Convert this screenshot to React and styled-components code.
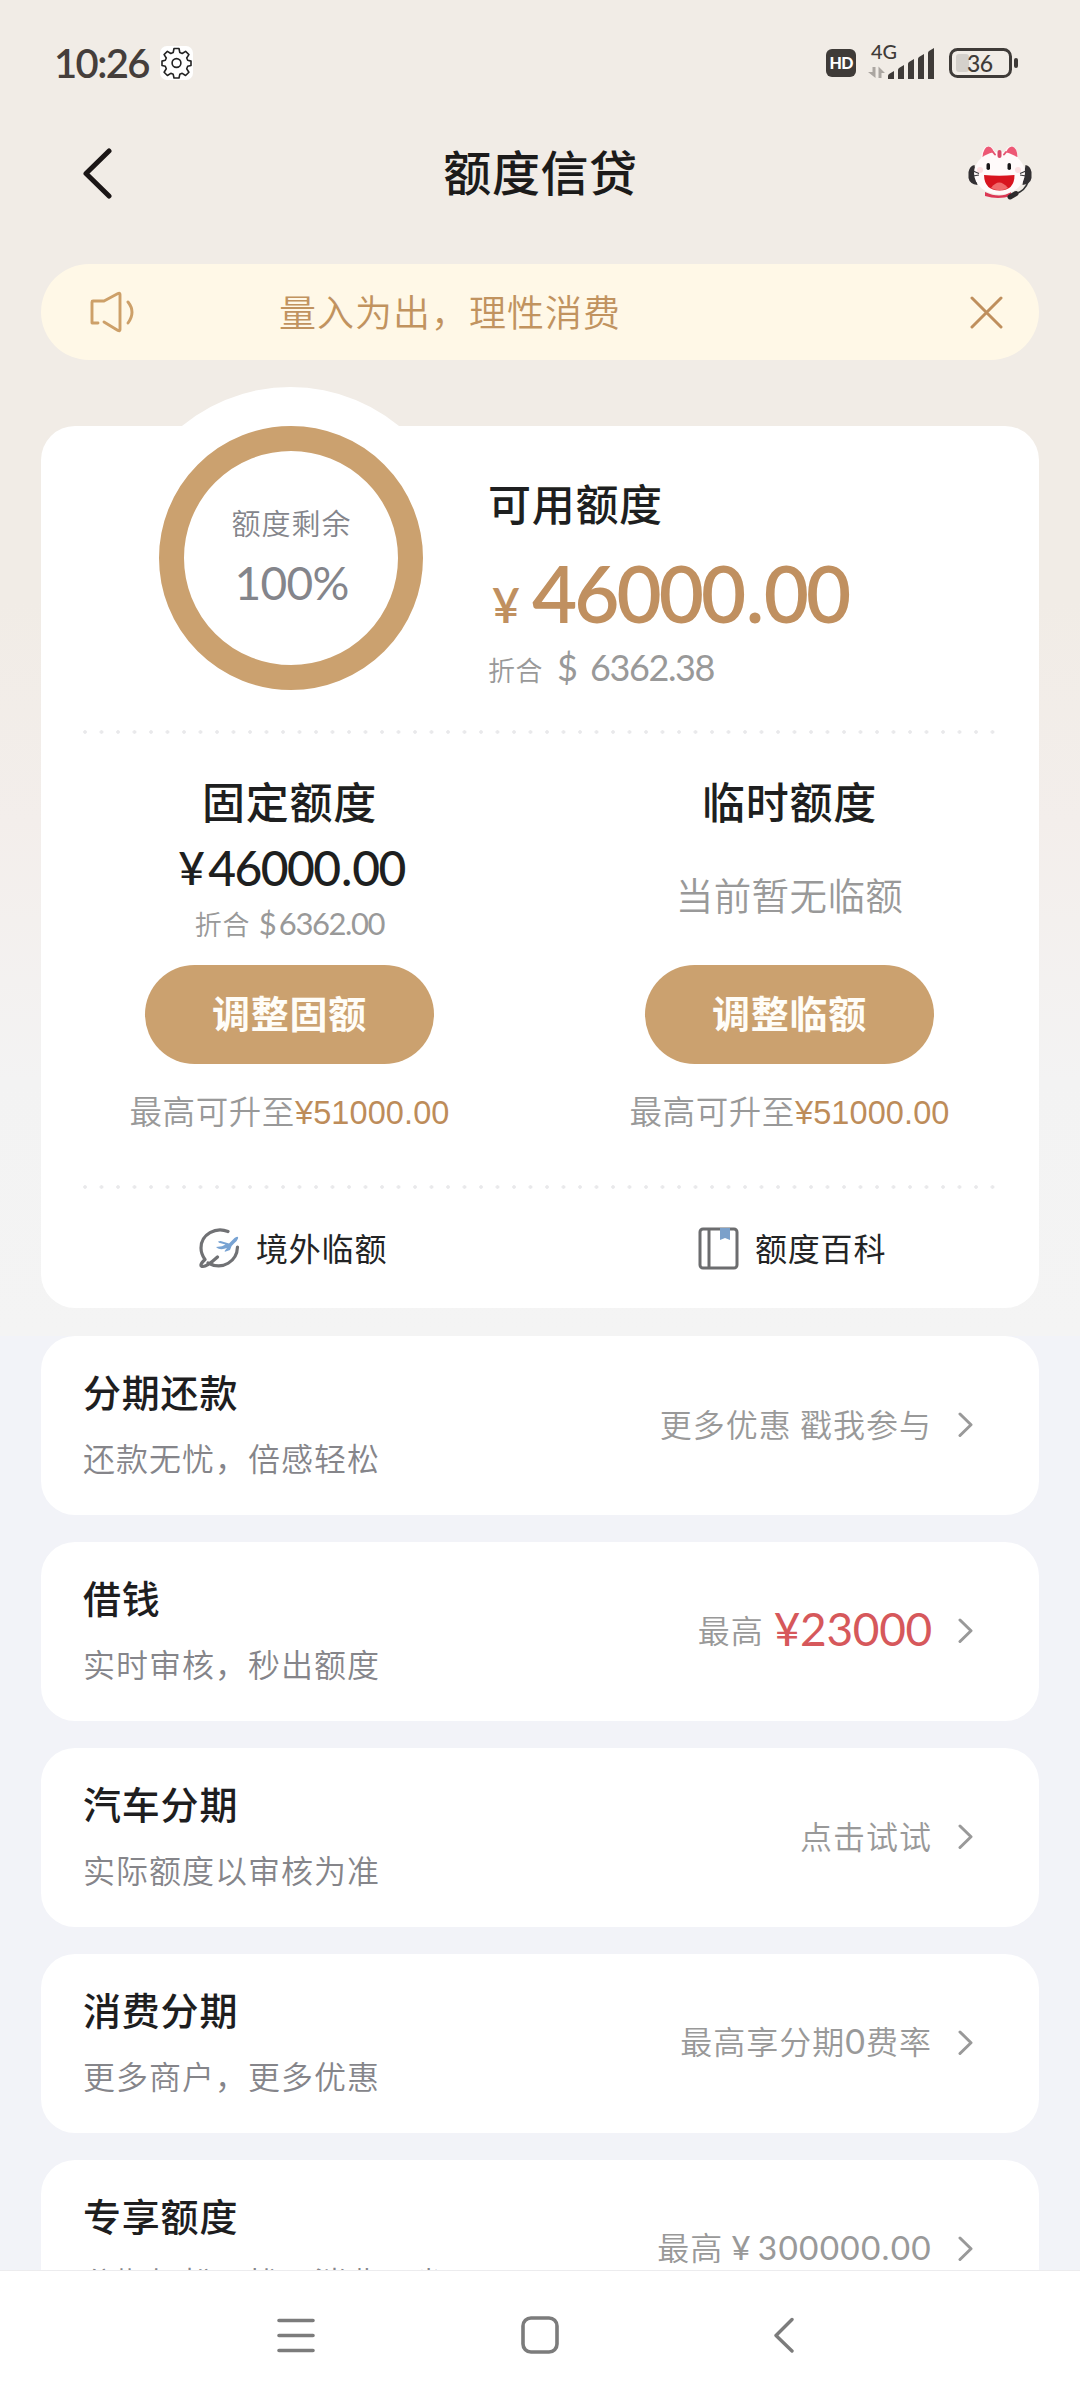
import React from "react";
import styled, { createGlobalStyle } from "styled-components";

const Global = createGlobalStyle`
  *{box-sizing:border-box}
  body{margin:0;font-family:"Noto Sans CJK SC",sans-serif}
`;
const num = `font-family:Lato,"Noto Sans CJK SC",sans-serif;`;

const Screen = styled.div`
  width:1080px;height:2400px;overflow:hidden;display:flex;flex-direction:column;
  background:linear-gradient(#f1ece6 0,#f1ece6 600px,#f3eeeb 820px,#f3f3f3 1080px,#f4f4f4 1336px,#f2f3f8 1336px);
`;
const StatusBar = styled.div`
  height:126px;flex:none;padding:0 55px 0 54px;display:flex;justify-content:space-between;align-items:center;
`;
const StatusGroup = styled.div`display:flex;align-items:center;`;
const Clock = styled.span`${num}font-size:40px;line-height:48px;color:#453e3b;font-weight:600;width:106px;letter-spacing:-1.6px;white-space:nowrap;`;
const Header = styled.header`
  height:138px;flex:none;padding:0 47px 43px 82px;display:grid;grid-template-columns:70px 1fr 70px;align-items:center;
  svg:last-child{margin:-3px 0 0 3px;}
`;
const Title = styled.h1`margin:-8px 0 0 -34px;text-align:center;font-size:48px;line-height:64px;letter-spacing:.6px;font-weight:500;color:#1c1b1a;`;
const Notice = styled.div`
  flex:none;margin:0 41px;height:96px;border-radius:48px;background:#fff8e7;display:flex;align-items:center;padding:0 36px 0 47px;color:#c1935f;
`;
const NoticeText = styled.span`flex:1;padding:0 0 3px 143px;font-size:37px;letter-spacing:1px;font-weight:350;`;
const Panel = styled.section`
  flex:none;margin:66px 41px 0;height:882px;border-radius:34px;background:#fff;display:flex;flex-direction:column;
`;
const Summary = styled.div`height:304px;display:flex;`;
const Gauge = styled.div`
  width:341px;height:341px;flex:none;margin:-39px 0 0 79px;border-radius:50%;background:#fff;display:grid;place-items:center;
`;
const Ring = styled.div`
  width:264px;height:264px;border-radius:50%;border:25px solid #cba16f;display:flex;flex-direction:column;align-items:center;padding:51px 0 0 2px;color:#84858b;
`;
const RingLabel = styled.span`font-size:29px;line-height:40px;letter-spacing:1px;font-weight:350;`;
const RingValue = styled.span`${num}font-size:46px;line-height:56px;margin-top:13px;letter-spacing:-.7px;`;
const Available = styled.div`padding:48px 0 0 27px;display:flex;flex-direction:column;white-space:nowrap;`;
const PanelHeading = styled.h2`margin:0;font-size:43px;line-height:56px;letter-spacing:.7px;font-weight:500;color:#1e1f20;`;
const Amount = styled.div`
  ${num}font-size:78px;line-height:84px;margin-top:21px;letter-spacing:-3px;font-weight:600;color:#c09060;display:flex;align-items:baseline;
`;
const Point = styled.span`margin:0 ${p => p.$gap}px;`;
const Yen = styled.span`font-size:${p => p.$size}px;width:${p => p.$w}px;padding-left:${p => p.$pad || 0}px;letter-spacing:0;`;
const Converted = styled.div`
  ${num}display:flex;align-items:baseline;color:#999;line-height:40px;font-size:${p => p.$size}px;letter-spacing:-1.4px;
`;
const ConvLabel = styled.span`font-family:"Noto Sans CJK SC",sans-serif;font-size:27px;letter-spacing:.6px;font-weight:350;width:${p => p.$w}px;`;
const Dollar = styled.span`width:${p => p.$w}px;`;
const Dots = styled.div`
  height:4px;margin:0 41px;flex:none;background:radial-gradient(circle at 3px 2px,#e9e9eb 1.5px,transparent 2.1px) 0 0/16.5px 4px repeat-x;
`;
const Columns = styled.div`height:451px;display:grid;grid-template-columns:500px 500px;margin-right:-2px;`;
const Column = styled.div`display:flex;flex-direction:column;align-items:center;padding:38px 3px 0 0;white-space:nowrap;`;
const FixedAmount = styled.div`${num}height:56px;line-height:56px;font-size:48px;letter-spacing:-1.6px;font-weight:500;color:#1e1f20;display:flex;margin:12px 0 7px 4px;`;
const Empty = styled.div`height:115px;line-height:91px;padding-top:20px;font-size:37.500px;letter-spacing:.4px;font-weight:350;color:#999;`;
const PillButton = styled.button`
  width:289px;height:99px;border:0;border-radius:50px;background:#cba16f;color:#fffdf8;font:700 38px/94px "Noto Sans CJK SC",sans-serif;letter-spacing:.8px;padding:0 0 5px;margin-top:22px;
`;
const ConvBox = styled.div`height:40px;`;
const UpTo = styled.div`margin-top:21px;font-size:32.500px;line-height:50px;letter-spacing:.6px;font-weight:350;color:#999;`;
const UpToAmount = styled.span`font-family:"Liberation Sans",sans-serif;color:#bd8c5a;letter-spacing:.1px;font-size:32.500px;`;
const Links = styled.div`flex:1;display:grid;grid-template-columns:500px 1fr;`;
const LinkItem = styled.div`
  display:flex;align-items:center;padding:0 0 1px ${p => p.$left}px;gap:16px;font-size:32px;letter-spacing:.8px;color:#232425;
`;
const LinkText = styled.span`margin-top:-3px;`;
const List = styled.div`flex:1;min-height:0;overflow:hidden;padding:28px 41px 0;display:flex;flex-direction:column;gap:27px;`;
const Card = styled.section`
  flex:none;height:179px;border-radius:34px;background:#fff;padding:0 66px 0 42px;display:flex;align-items:center;justify-content:space-between;
`;
const CardTitle = styled.h3`margin:0;font-size:38px;line-height:50px;letter-spacing:.8px;font-weight:500;color:#1e1e1f;`;
const CardSub = styled.p`margin:16px 0 0;font-size:32px;line-height:50px;letter-spacing:1px;font-weight:350;color:#85858a;white-space:nowrap;`;
const CardCopy = styled.div`padding-bottom:3px;`;
const CardAction = styled.div`
  display:flex;align-items:center;gap:25px;color:#999;white-space:nowrap;margin-top:-2px;
`;
const ActionText = styled.span`display:flex;align-items:${p => (p.$centered ? "center" : "baseline")};font-size:32px;line-height:44px;letter-spacing:1px;font-weight:350;margin-top:-4px;`;
const RedAmount = styled.span`${num}font-size:46px;font-weight:400;color:#d6585b;letter-spacing:-.3px;margin-left:10px;`;
const Digits = styled.span`${num}font-size:${p => p.$size}px;letter-spacing:${p => p.$ls}px;margin-left:${p => p.$ml || 0}px;font-weight:400;`;
const NavBar = styled.nav`
  height:130px;flex:none;background:#fff;box-shadow:inset 0 1px #ececee;display:flex;padding:46px 0 0 277px;
  svg:nth-child(2){margin:0 214px 0 206px;}
`;

const Gear = () => (
  <svg width="33" height="34" viewBox="0 0 33 34">
    <rect width="33" height="34" rx="7" fill="#fff" />
    <g fill="none" stroke="#222" strokeWidth="1.6" strokeLinejoin="round">
      <path d="M14 2.5h5l.8 4 2.4 1 3.4-2.2 3.3 3.3-2.2 3.4 1 2.3 3.3.8v4.4l-3.3.8-1 2.5 2.2 3.4-3.3 3.3-3.4-2.2-2.4 1-.8 3.7h-5l-.8-3.7-2.4-1-3.4 2.2-3.3-3.3 2.2-3.4-1-2.5-3.3-.8v-4.4l3.3-.8 1-2.3-2.2-3.4 3.3-3.3 3.4 2.2 2.4-1z" />
      <circle cx="16.5" cy="17" r="4.4" />
    </g>
  </svg>
);
const StatusIcons = () => (
  <svg width="200" height="56" viewBox="825 35 200 56" fontFamily="Lato, sans-serif" fill="#3f3b38">
    <rect x="826" y="49" width="30" height="28" rx="6" />
    <text x="829.500" y="69" fontSize="16" fontWeight="900" fill="#fff" textLength="24">HD</text>
    <text x="871" y="59" fontSize="20" textLength="26" lengthAdjust="spacingAndGlyphs" fontWeight="500">4G</text>
    <g fill="#aba6a1"><path d="M872.500 67h3v11l-7.500-6h4.500zM878.500 78h3v-5h3.500l-6.500-6.500z" /></g>
    <path d="M888 79v-3q0-1 1-2l5-3v8zM898 79v-9q0-1 1-2l5-3v14zM908 79V64q0-1 1-2l5-3v20zM918 79V59q0-1 1-2l5-3v25zM928 79V53q0-1 1-2l5-3v31z" />
    <rect x="950.5" y="49.5" width="60" height="27" rx="7" fill="none" stroke="#3f3b38" strokeWidth="3" />
    <rect x="956" y="54" width="13" height="18" rx="3" fill="#d4d0cb" />
    <rect x="1014" y="58" width="4" height="10" rx="2" />
    <text x="967" y="71.500" fontSize="23" textLength="26" fontWeight="500">36</text>
  </svg>
);
const Mascot = () => (
  <svg width="68" height="60" viewBox="966 142 68 60">
    <path d="M968.500 172q1-6 6-7l3 20q-8-1-9-7zM1031.500 172q-1-6-6-7l-3 20q8-1 9-7z" fill="#333033" />
    <path d="M985 192q15 7 26 0v4q-13 4-26 0z" fill="#dc3855" />
    <path d="M981 160q0-13 7-14 6 0 7 8M1004 154q2-8 8-8 6 1 6 14" fill="#fff6f6" />
    <path d="M982.500 157q1-10 6-10.500 5 1 5.500 7.500zM1006 154q1-7 6-7.500 5 1 5.500 10.500z" fill="#ed5875" />
    <ellipse cx="999.5" cy="173" rx="25.5" ry="21.5" fill="#fffafa" />
    <path d="M999.500 152v4" stroke="#d84a68" strokeWidth="4" strokeLinecap="round" />
    <path d="M993 152l2 2.500M1006 152l-2 2.500" stroke="#e55571" strokeWidth="2" strokeLinecap="round" />
    <circle cx="980" cy="170" r="3" fill="#fde0e2" /><circle cx="1018" cy="170" r="3" fill="#fde0e2" />
    <rect x="986.5" y="163" width="3.5" height="7" rx="1.75" fill="#181718" /><rect x="1007.5" y="163" width="3.5" height="7" rx="1.75" fill="#181718" />
    <path d="M984 175q15 1.500 30.500 0 0 15.500-15 15.500T984 175z" fill="#d8141f" /><path d="M991 188q8-11 17 0-8 4.500-17 0z" fill="#f06a6c" />
    <path d="M973 171l6 2.500M973 176l6-1M1026 171l-6 2.500M1026 176l-6-1" stroke="#39363a" strokeWidth="1.1" />
    <path d="M1028 182q-3 9-13 12" stroke="#333" strokeWidth="1.600" fill="none" /><path d="M1010 197l6-3.500" stroke="#2d2a2c" strokeWidth="5" strokeLinecap="round" />
  </svg>
);
const Speaker = () => (
  <svg width="48" height="42" viewBox="0 0 48 42" fill="none" stroke="#cda069" strokeWidth="2.9" strokeLinecap="round" strokeLinejoin="round">
    <path d="M10 32H4V11q0-1 1-1h11L30 2.500q2-1 2 1v35q0 2-2 1L16 31M40 11q8 10 0 21" />
  </svg>
);
const Close = () => (
  <svg width="33" height="33" viewBox="0 0 33 33" stroke="#bf8f5d" strokeWidth="3" strokeLinecap="round"><path d="M2 2l29 29M31 2L2 31" /></svg>
);
const Plane = () => (
  <svg width="41" height="41" viewBox="0 0 41 41" fill="none" stroke="#707174" strokeWidth="3.2" strokeLinecap="round" strokeLinejoin="round">
    <path d="M29 3.500C17-1.500 2 6 2 20q0 6 4 11.500M38.500 19C38 33 24 43 9 35M6 31.500C1 36 1 38.500 4 38.500 8 38.500 13 34 18.500 29" />
    <path d="M19 13.500l2.500-.6 8.500 2.600 5.500-5.500q4.500-2.500 3.500.5-1 3-4 5-3 2-4 6.500l-5 1.700q-.8-.2 0-1.200l2-2.500q-5 2-9 .5l-2-1.500 6-.8 3.500-1.800-6.500-1.600z" fill="#78a3d3" stroke="none" />
  </svg>
);
const Book = () => (
  <svg width="41" height="43" viewBox="0 0 41 43" fill="none" stroke="#6c6d6f" strokeWidth="3">
    <rect x="2" y="2" width="37" height="39" rx="3" /><path d="M11 2v39" /><path d="M22 1h10v12l-5-2-5 2z" fill="#7ba0ca" stroke="none" />
  </svg>
);
const Chevron = () => (
  <svg width="16" height="27" viewBox="0 0 16 27" fill="none" stroke="#999" strokeWidth="3" strokeLinecap="round" strokeLinejoin="round"><path d="M3 3l11 10.750L3 24.500" /></svg>
);

const ROWS = [
  { title: "分期还款", sub: "还款无忧，倍感轻松", action: "更多优惠 戳我参与" },
  { title: "借钱", sub: "实时审核，秒出额度", centered: true, action: <>最高<RedAmount>¥23000</RedAmount></> },
  { title: "汽车分期", sub: "实际额度以审核为准", action: "点击试试" },
  { title: "消费分期", sub: "更多商户，更多优惠", action: <>最高享分期<Digits $size={34} $ls={1}>0</Digits>费率</> },
  { title: "专享额度", sub: "分期轻松无忧，消费更省", action: <>最高<Digits $size={33.5} $ls={1.2} $ml={8}>¥</Digits><Digits $size={33.5} $ls={1.2} $ml={6}>300000.00</Digits></> },
];

function Offer({ heading, children, action }) {
  return (
    <Column>
      <PanelHeading>{heading}</PanelHeading>
      {children}
      <PillButton>{action}</PillButton>
      <UpTo>最高可升至<UpToAmount>¥51000.00</UpToAmount></UpTo>
    </Column>
  );
}

export default function App() {
  return (
    <Screen>
      <Global />
      <StatusBar>
        <StatusGroup><Clock>10:26</Clock><Gear /></StatusGroup>
        <StatusIcons />
      </StatusBar>
      <Header>
        <svg width="31" height="52" viewBox="0 0 31 52" fill="none" stroke="#1b1616" strokeWidth="5" strokeLinecap="round" strokeLinejoin="round"><path d="M27 3L4 25.500l23 22.500" /></svg>
        <Title>额度信贷</Title>
        <Mascot />
      </Header>
      <Notice><Speaker /><NoticeText>量入为出，理性消费</NoticeText><Close /></Notice>
      <Panel>
        <Summary>
          <Gauge><Ring><RingLabel>额度剩余</RingLabel><RingValue>100%</RingValue></Ring></Gauge>
          <Available>
            <PanelHeading>可用额度</PanelHeading>
            <Amount><Yen $size={48} $w={44} $pad={4}>¥</Yen>46000<Point $gap={2.5}>.</Point>00</Amount>
            <Converted $size={36}><ConvLabel $w={69}>折合</ConvLabel><Dollar $w={33}>$</Dollar>6362.38</Converted>
          </Available>
        </Summary>
        <Dots />
        <Columns>
          <Offer heading="固定额度" action="调整固额">
            <FixedAmount><Yen $size={46} $w={30}>¥</Yen>46000<Point $gap={1.5}>.</Point>00</FixedAmount>
            <ConvBox><Converted $size={31}><ConvLabel $w={64}>折合</ConvLabel><Dollar $w={20}>$</Dollar>6362.00</Converted></ConvBox>
          </Offer>
          <Offer heading="临时额度" action="调整临额"><Empty>当前暂无临额</Empty></Offer>
        </Columns>
        <Dots />
        <Links>
          <LinkItem $left={158}><Plane /><LinkText>境外临额</LinkText></LinkItem>
          <LinkItem $left={157}><Book /><LinkText>额度百科</LinkText></LinkItem>
        </Links>
      </Panel>
      <List>
        {ROWS.map(r => (
          <Card key={r.title}>
            <CardCopy><CardTitle>{r.title}</CardTitle><CardSub>{r.sub}</CardSub></CardCopy>
            <CardAction><ActionText $centered={r.centered}>{r.action}</ActionText><Chevron /></CardAction>
          </Card>
        ))}
      </List>
      <NavBar>
        <svg width="38" height="38" viewBox="0 0 38 38" stroke="#7c7c7c" strokeWidth="3.6" strokeLinecap="round"><path d="M2 4.500h34M2 19.500h34M2 34.500h34" /></svg>
        <svg width="38" height="38" viewBox="0 0 38 38"><rect x="2" y="2" width="34" height="34" rx="8" fill="none" stroke="#7c7c7c" strokeWidth="3.6" /></svg>
        <svg width="21" height="38" viewBox="0 0 21 38" fill="none" stroke="#7c7c7c" strokeWidth="3.4" strokeLinecap="round" strokeLinejoin="round"><path d="M19 3.500L3 19.500l16 15.500" /></svg>
      </NavBar>
    </Screen>
  );
}
